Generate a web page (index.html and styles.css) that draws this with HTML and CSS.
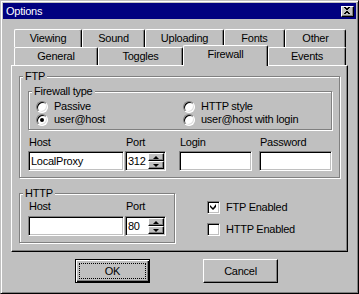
FILE: index.html
```html
<!DOCTYPE html>
<html lang="en">
<head>
  <meta charset="UTF-8">
  <title>Options</title>
  <link rel="stylesheet" href="styles.css">
</head>
<body>
  <div class="window">
    <div class="titlebar">
      <span class="title">Options</span>
      <div class="close-btn">
        <svg width="8" height="7" viewBox="0 0 8 7"><path d="M1 0h2v1h2V0h2v1H6v1H5v1h-1v1h1v1h1v1h1v1H5V6H3v1H1V6h1V5h1V4H4V3H3V2H2V1H1z" fill="#000"/></svg>
      </div>
    </div>

    <div class="content">
      <!-- tab strip, two rows -->
      <div class="tabs">
        <div class="tab-row">
          <div class="tab tab-viewing">Viewing</div>
          <div class="tab tab-sound">Sound</div>
          <div class="tab tab-uploading">Uploading</div>
          <div class="tab tab-fonts">Fonts</div>
          <div class="tab tab-other">Other</div>
        </div>
        <div class="tab-row">
          <div class="tab tab-general">General</div>
          <div class="tab tab-toggles">Toggles</div>
          <div class="tab tab-firewall active">Firewall</div>
          <div class="tab tab-events">Events</div>
        </div>
      </div>

      <div class="panel">
        <div class="group ftp-group">
          <span class="group-label">FTP</span>

          <div class="group firewall-group">
            <span class="group-label">Firewall type</span>
            <div class="radio-grid">
              <div class="radio"><span class="radio-dot"></span>Passive</div>
              <div class="radio"><span class="radio-dot"></span>HTTP style</div>
              <div class="radio"><span class="radio-dot checked"></span>user@host</div>
              <div class="radio"><span class="radio-dot"></span>user@host with login</div>
            </div>
          </div>

          <div class="fields ftp-fields">
            <div class="field field-host">
              <span class="field-label">Host</span>
              <div class="textbox"><span class="textbox-text">LocalProxy</span></div>
            </div>
            <div class="field field-port">
              <span class="field-label">Port</span>
              <div class="textbox">
                <span class="textbox-text">312</span>
                <div class="spinner">
                  <div class="spin-btn"><span class="arrow-up"></span></div>
                  <div class="spin-btn"><span class="arrow-down"></span></div>
                </div>
              </div>
            </div>
            <div class="field field-login">
              <span class="field-label">Login</span>
              <div class="textbox"></div>
            </div>
            <div class="field field-password">
              <span class="field-label">Password</span>
              <div class="textbox"></div>
            </div>
          </div>
        </div>

        <div class="lower">
          <div class="group http-group">
            <span class="group-label">HTTP</span>
            <div class="fields http-fields">
              <div class="field field-host">
                <span class="field-label">Host</span>
                <div class="textbox"></div>
              </div>
              <div class="field field-port">
                <span class="field-label">Port</span>
                <div class="textbox">
                  <span class="textbox-text">80</span>
                  <div class="spinner">
                    <div class="spin-btn"><span class="arrow-up"></span></div>
                    <div class="spin-btn"><span class="arrow-down"></span></div>
                  </div>
                </div>
              </div>
            </div>
          </div>

          <div class="checks">
            <div class="check">
              <span class="check-box">
                <svg width="7" height="7" viewBox="0 0 7 7"><path d="M6 0v3L3 6 0 3V1l3 3z" fill="#000"/></svg>
              </span>
              FTP Enabled
            </div>
            <div class="check">
              <span class="check-box"></span>
              HTTP Enabled
            </div>
          </div>
        </div>
      </div>

      <div class="buttons">
        <div class="btn btn-default"><span class="focus-rect">OK</span></div>
        <div class="btn btn-cancel">Cancel</div>
      </div>
    </div>
  </div>
</body>
</html>
```

FILE: styles.css
```css
* {
  margin: 0;
  padding: 0;
  box-sizing: border-box;
}

html, body {
  overflow: hidden;
}

body {
  background: #c0c0c0;
  font-family: "Liberation Sans", Arial, sans-serif;
  font-size: 11px;
  letter-spacing: -0.25px;
  color: #000;
}

.window {
  width: 359px;
  height: 294px;
  padding: 2px;
  border: 1px solid;
  border-color: #c0c0c0 #000 #000 #c0c0c0;
  box-shadow: inset 1px 1px #fff, inset -1px -1px #808080;
  background: #c0c0c0;
}

/* title bar */
.titlebar {
  height: 16px;
  background: #000080;
  color: #fff;
  display: flex;
  align-items: center;
  justify-content: space-between;
  padding-left: 3px;
}

.title {
  line-height: 14px;
  padding-bottom: 1px;
}

.close-btn {
  width: 13px;
  height: 11px;
  margin-right: 2px;
  background: #c0c0c0;
  border: 1px solid;
  border-color: #fff #000 #000 #fff;
  box-shadow: inset -1px -1px #808080;
  display: flex;
  align-items: center;
  justify-content: center;
}

.close-btn svg {
  display: block;
  margin: 0 1px 1px 0;
}

.content {
  padding-left: 8px;
}

/* tabs */
.tabs {
  margin: 10px 0 0 3px;
}

.tab-row {
  display: flex;
  height: 18px;
}

.tab {
  height: 18px;
  line-height: 17px;
  text-align: center;
  border-top: 1px solid #fff;
  border-left: 1px solid #fff;
  border-right: 1px solid #000;
  border-radius: 2px 2px 0 0;
  box-shadow: inset -1px 0 #808080;
}

.tab.active {
  position: relative;
  z-index: 1;
  height: 21px;
  margin-top: -2px;
  line-height: 17px;
  padding-bottom: 3px;
  background: #c0c0c0;
}

.tab-viewing { width: 68px; }
.tab-sound { width: 63px; }
.tab-uploading { width: 79px; }
.tab-fonts { width: 61px; }
.tab-other { width: 61px; }
.tab-general { width: 84px; }
.tab-toggles { width: 85px; }
.tab-firewall { width: 85px; }
.tab-events { width: 78px; }

/* tab page */
.panel {
  width: 337px;
  height: 187px;
  border: 1px solid;
  border-color: #fff #000 #000 #fff;
  box-shadow: inset -1px -1px #808080;
  padding: 10px 0 0 7px;
}

.group {
  border: 1px solid #808080;
  box-shadow: inset 1px 1px #fff, 1px 1px #fff;
}

.group-label {
  display: table;
  margin: -7px 0 0 3px;
  padding: 0 2px;
  line-height: 13px;
  background: #c0c0c0;
}

.ftp-group {
  width: 321px;
  height: 102px;
}

.firewall-group {
  width: 304px;
  height: 39px;
  margin: 8px 0 0 8px;
}

.radio-grid {
  display: grid;
  grid-template-columns: 147px auto;
  margin: 2px 0 0 7px;
}

.radio {
  display: flex;
  align-items: center;
  height: 13px;
  line-height: 13px;
}

.radio-dot {
  position: relative;
  width: 12px;
  height: 12px;
  margin-right: 6px;
  border-radius: 50%;
  border: 1px solid;
  border-color: #808080 #fff #fff #808080;
  box-shadow: inset 1px 1px #000, inset -1px -1px #dfdfdf;
  background: #fff;
}

.radio-dot.checked::after {
  content: "";
  position: absolute;
  left: 3px;
  top: 3px;
  width: 4px;
  height: 4px;
  border-radius: 50%;
  background: #000;
}

.fields {
  display: flex;
  margin-left: 8px;
}

.ftp-fields {
  margin-top: 6px;
}

.field-label {
  display: block;
  line-height: 13px;
  padding-left: 1px;
}

.ftp-fields .textbox {
  margin-top: 2px;
}

.http-fields .textbox {
  margin-top: 3px;
}

.field-host { width: 96px; }
.field-port { width: 41px; margin-left: 1px; }
.field-login { width: 73px; margin-left: 13px; }
.field-password { width: 73px; margin-left: 7px; }

.textbox {
  display: flex;
  height: 20px;
  background: #fff;
  border: 1px solid;
  border-color: #808080 #fff #fff #808080;
  box-shadow: inset 1px 1px #000, inset -1px -1px #c0c0c0;
  padding: 2px;
}

.textbox-text {
  flex: 1;
  line-height: 15px;
  padding-left: 0;
}

.field-port .textbox-text {
  padding-left: 0;
}

.spinner {
  width: 16px;
  margin: -1px -1px -1px 0;
  display: flex;
  flex-direction: column;
}

.spin-btn {
  height: 8px;
  background: #c0c0c0;
  border: 1px solid;
  border-color: #fff #000 #000 #fff;
  box-shadow: inset -1px -1px #808080;
  display: flex;
  align-items: center;
  justify-content: center;
}

.arrow-up,
.arrow-down {
  width: 0;
  height: 0;
  border-left: 3px solid transparent;
  border-right: 3px solid transparent;
}

.arrow-up {
  border-bottom: 3px solid #000;
}

.arrow-down {
  border-top: 3px solid #000;
}

/* lower part: http box + checkboxes */
.lower {
  display: flex;
  margin-top: 15px;
}

.http-group {
  width: 156px;
  height: 50px;
}

.checks {
  margin: 8px 0 0 32px;
}

.check {
  display: flex;
  align-items: center;
  height: 13px;
  line-height: 13px;
}

.check + .check {
  margin-top: 9px;
}

.check-box {
  width: 13px;
  height: 13px;
  margin-right: 6px;
  background: #fff;
  border: 1px solid;
  border-color: #808080 #fff #fff #808080;
  box-shadow: inset 1px 1px #000, inset -1px -1px #c0c0c0;
  display: flex;
  align-items: center;
  justify-content: center;
}

.check-box svg {
  display: block;
}

/* dialog buttons */
.buttons {
  display: flex;
  margin: 7px 0 0 64px;
}

.btn {
  width: 75px;
  height: 24px;
  display: flex;
  align-items: center;
  justify-content: center;
  background: #c0c0c0;
  border: 1px solid;
  border-color: #fff #000 #000 #fff;
  box-shadow: inset -1px -1px #808080;
}

.btn-default {
  border-color: #000;
  box-shadow: inset 1px 1px #fff, inset -1px -1px #000, inset -2px -2px #808080;
  padding: 3px;
}

.focus-rect {
  display: flex;
  align-items: center;
  justify-content: center;
  width: 100%;
  height: 100%;
  outline: 1px dotted #000;
  outline-offset: -1px;
}

.btn-cancel {
  margin-left: 53px;
}
```
